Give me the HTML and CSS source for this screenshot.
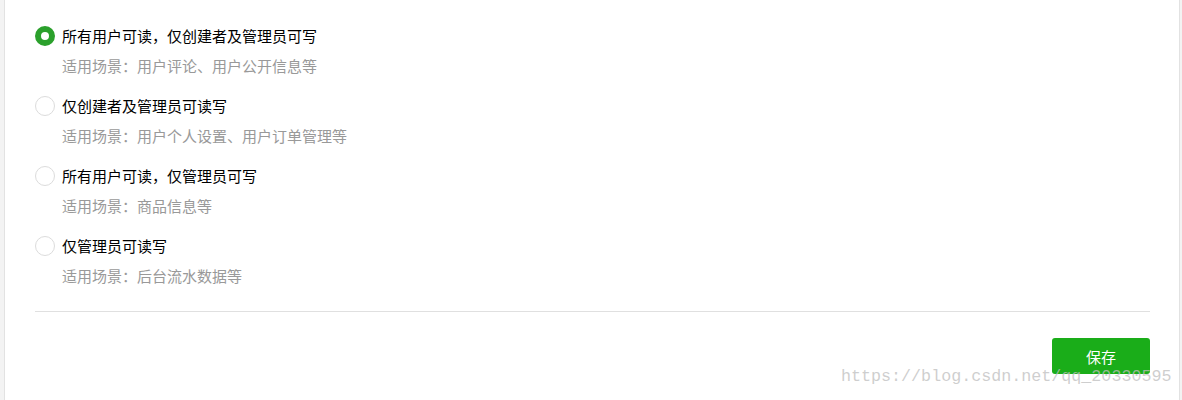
FILE: index.html
```html
<!DOCTYPE html>
<html lang="zh">

<head>
  <meta charset="UTF-8">
  <title>数据权限设置</title>
  <link rel="stylesheet" href="styles.css">
</head>

<body>
  <div class="panel">
    <div class="options">
      <label class="option">
        <span class="radio checked"></span>
        <span class="title">所有用户可读，仅创建者及管理员可写</span>
        <span class="desc">适用场景：用户评论、用户公开信息等</span>
      </label>
      <label class="option">
        <span class="radio"></span>
        <span class="title">仅创建者及管理员可读写</span>
        <span class="desc">适用场景：用户个人设置、用户订单管理等</span>
      </label>
      <label class="option">
        <span class="radio"></span>
        <span class="title">所有用户可读，仅管理员可写</span>
        <span class="desc">适用场景：商品信息等</span>
      </label>
      <label class="option">
        <span class="radio"></span>
        <span class="title">仅管理员可读写</span>
        <span class="desc">适用场景：后台流水数据等</span>
      </label>
    </div>
    <div class="footer">
      <button class="btn-save">保存</button>
    </div>
    <div class="watermark">https://blog.csdn.net/qq_20330595</div>
  </div>
</body>

</html>
```

FILE: styles.css
```css
body {
  margin: 0;
  background: #f3f3f3;
  font-family: "Noto Sans CJK SC", "Liberation Sans", sans-serif;
  font-size: 15px;
}

.panel {
  position: relative;
  box-sizing: border-box;
  margin-left: 4px;
  width: 1176px;
  height: 400px;
  padding: 26px 29px 0 30px;
  background: #fff;
  border-left: 1px solid #e2e2e2;
  border-right: 1px solid #e2e2e2;
}

.options {
  display: flex;
  flex-direction: column;
  gap: 20px;
  padding-bottom: 25px;
  border-bottom: 1px solid #e0e0e0;
}

.option {
  display: grid;
  grid-template-columns: 20px auto;
  column-gap: 7px;
  row-gap: 10px;
  line-height: 20px;
}

.radio {
  box-sizing: border-box;
  width: 20px;
  height: 20px;
  border-radius: 50%;
  border: 1px solid #dcdcdc;
  background: #fff;
}

.radio.checked {
  border: 6px solid #2ba02c;
}

.title {
  color: #000;
}

.desc {
  grid-column: 2;
  color: #999;
}

.footer {
  display: flex;
  justify-content: flex-end;
  padding-top: 26px;
}

.btn-save {
  width: 98px;
  height: 36px;
  border: none;
  border-radius: 3px;
  background: #1aad19;
  color: #fff;
  font-family: inherit;
  font-size: 15px;
}

.watermark {
  position: absolute;
  left: 836px;
  top: 367px;
  font-family: "Liberation Mono", monospace;
  font-size: 16.7px;
  line-height: 20px;
  color: rgba(190, 190, 190, 0.75);
  pointer-events: none;
}
```
